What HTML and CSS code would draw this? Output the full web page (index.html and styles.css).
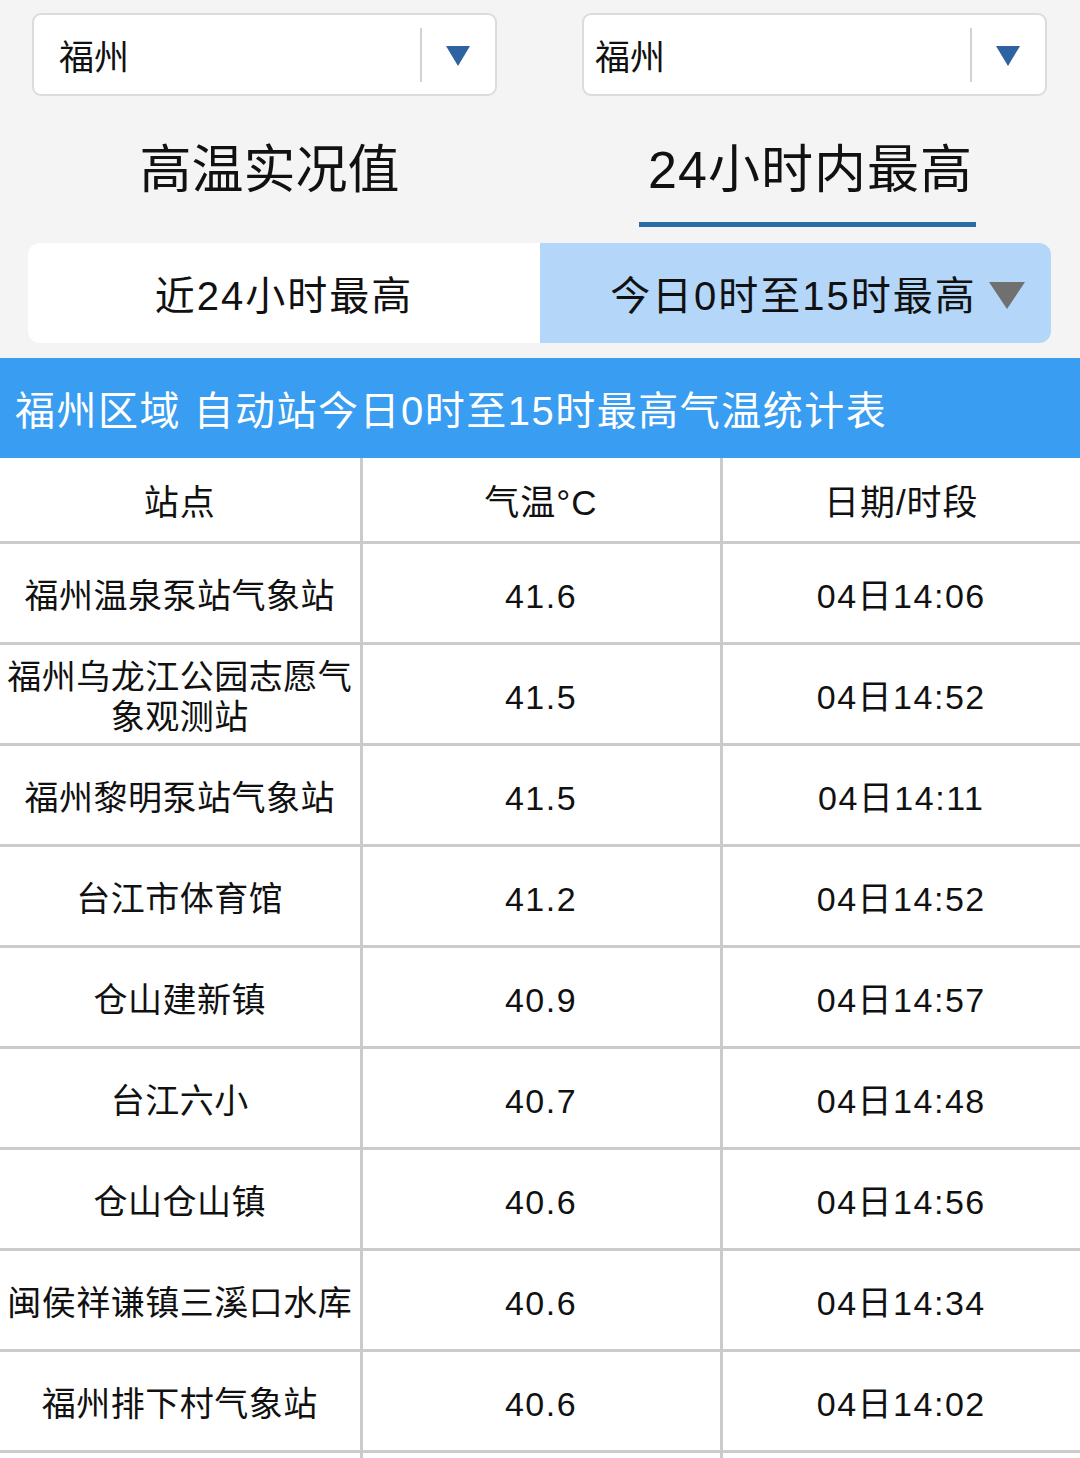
FILE: index.html
```html
<!DOCTYPE html>
<html lang="zh">
<head>
<meta charset="utf-8">
<link rel="stylesheet" href="styles.css">
</head>
<body>
<div class="selects">
  <div class="select"><span class="sel-text">福州</span><span class="sel-div"></span><span class="sel-arrow"></span></div>
  <div class="select right"><span class="sel-text">福州</span><span class="sel-div"></span><span class="sel-arrow"></span></div>
</div>
<div class="tabs">
  <div class="tab">高温实况值</div>
  <div class="tab active">24小时内最高</div>
</div>
<div class="segment">
  <div class="seg">近24小时最高</div>
  <div class="seg on">今日0时至15时最高<span class="seg-arrow"></span></div>
</div>
<div class="band">福州区域 自动站今日0时至15时最高气温统计表</div>
<table class="grid">
  <colgroup><col class="c1"><col class="c2"><col class="c3"></colgroup>
  <thead>
    <tr><th>站点</th><th>气温°C</th><th>日期/时段</th></tr>
  </thead>
  <tbody>
    <tr><td>福州温泉泵站气象站</td><td>41.6</td><td>04日14:06</td></tr>
    <tr><td>福州乌龙江公园志愿气象观测站</td><td>41.5</td><td>04日14:52</td></tr>
    <tr><td>福州黎明泵站气象站</td><td>41.5</td><td>04日14:11</td></tr>
    <tr><td>台江市体育馆</td><td>41.2</td><td>04日14:52</td></tr>
    <tr><td>仓山建新镇</td><td>40.9</td><td>04日14:57</td></tr>
    <tr><td>台江六小</td><td>40.7</td><td>04日14:48</td></tr>
    <tr><td>仓山仓山镇</td><td>40.6</td><td>04日14:56</td></tr>
    <tr><td>闽侯祥谦镇三溪口水库</td><td>40.6</td><td>04日14:34</td></tr>
    <tr><td>福州排下村气象站</td><td>40.6</td><td>04日14:02</td></tr>
    <tr><td>&nbsp;</td><td>&nbsp;</td><td>&nbsp;</td></tr>
  </tbody>
</table>
</body>
</html>
```
FILE: styles.css
```css
html, body {
  margin: 0;
  padding: 0;
}
body {
  background: #f4f4f4;
  font-family: "Liberation Sans", "Noto Sans CJK SC", sans-serif;
  color: #111;
  width: 1080px;
  height: 1458px;
  overflow: hidden;
}
.selects {
  display: flex;
  justify-content: space-between;
  padding: 13px 33px 0 32px;
}
.select {
  width: 465px;
  height: 83px;
  box-sizing: border-box;
  background: #fff;
  border: 2px solid #dcdcdc;
  border-radius: 9px;
  display: flex;
  align-items: center;
  padding-left: 25px;
}
.select.right {
  padding-left: 11px;
}
.sel-text {
  font-size: 35px;
  flex: 1;
  color: #111;
}
.sel-div {
  width: 2px;
  height: 54px;
  background: #d2d2d2;
  margin-right: 24px;
}
.sel-arrow {
  width: 0;
  height: 0;
  border-left: 12px solid transparent;
  border-right: 12px solid transparent;
  border-top: 20px solid #2e62a0;
  margin-right: 25px;
  margin-top: 2px;
}
.tabs {
  display: flex;
  box-sizing: border-box;
  padding-top: 31px;
  height: 132px;
}
.tab {
  flex: 1;
  display: flex;
  justify-content: center;
  font-size: 52px;
  color: #111;
  line-height: 86px;
}
.tab.active {
  position: relative;
  letter-spacing: 1px;
  padding-left: 2px;
}
.tab.active::after {
  content: "";
  position: absolute;
  left: 100px;
  bottom: 1px;
  width: 337px;
  height: 5px;
  background: #2c6aa8;
}
.segment {
  display: flex;
  margin: 15px 29px 0 28px;
  height: 100px;
  border-radius: 12px;
  overflow: hidden;
}
.seg {
  background: #fff;
  font-size: 40px;
  letter-spacing: 2px;
  display: flex;
  align-items: center;
  justify-content: center;
  color: #111;
}
.seg:first-child {
  width: 512px;
  box-sizing: border-box;
}
.seg.on {
  flex: 1;
  background: #b4d6f8;
  padding-left: 44px;
}
.seg-arrow {
  width: 0;
  height: 0;
  border-left: 18px solid transparent;
  border-right: 18px solid transparent;
  border-top: 27px solid #707070;
  margin-left: 12px;
  margin-top: 4px;
}
.band {
  margin-top: 15px;
  height: 100px;
  background: #399df1;
  color: #fff;
  font-size: 40px;
  letter-spacing: 1.5px;
  display: flex;
  align-items: center;
  padding-left: 15px;
}
.grid {
  width: 1080px;
  border-collapse: collapse;
  table-layout: fixed;
  background: #fff;
}
.c1 { width: 361px; }
.c2 { width: 360px; }
.c3 { width: 359px; }
.grid th, .grid td {
  border: 3px solid #cbcbcb;
  text-align: center;
  padding: 0;
  font-weight: normal;
  color: #111;
}
.grid tr > :first-child { border-left: none; }
.grid tr > :last-child { border-right: none; }
.grid thead th {
  border-top: none;
  height: 83px;
  font-size: 35px;
  letter-spacing: 1px;
}
.grid td {
  height: 93px;
  padding-top: 5px;
  font-size: 34px;
  line-height: 40px;
  letter-spacing: 1.5px;
}
.grid td:first-child {
  letter-spacing: 0.5px;
}
```
